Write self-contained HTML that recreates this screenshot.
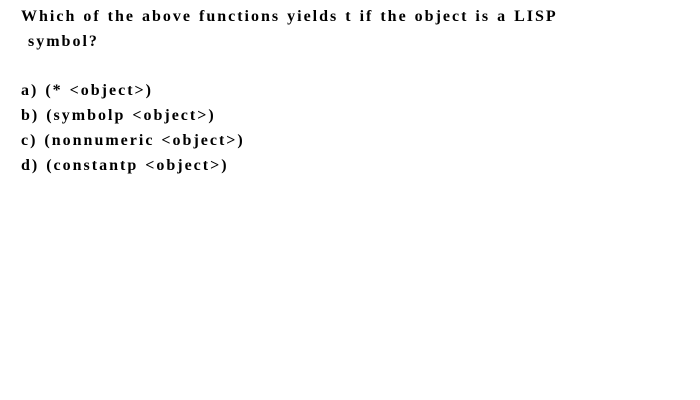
<!DOCTYPE html>
<html><head><style>
body{margin:0;width:700px;height:400px;background:#fff;position:relative;overflow:hidden}
div{position:absolute;left:21px;font-family:"Liberation Serif",serif;font-size:16px;font-weight:bold;color:#000;letter-spacing:2px;word-spacing:1px;white-space:pre;line-height:18px}
</style></head><body>
<div style="top:8px">Which of the above functions yields t if the object is a LISP</div>
<div style="top:33px"> symbol?</div>
<div style="top:82px">a) (* &lt;object&gt;)</div>
<div style="top:107px">b) (symbolp &lt;object&gt;)</div>
<div style="top:132px">c) (nonnumeric &lt;object&gt;)</div>
<div style="top:157px">d) (constantp &lt;object&gt;)</div>
</body></html>
